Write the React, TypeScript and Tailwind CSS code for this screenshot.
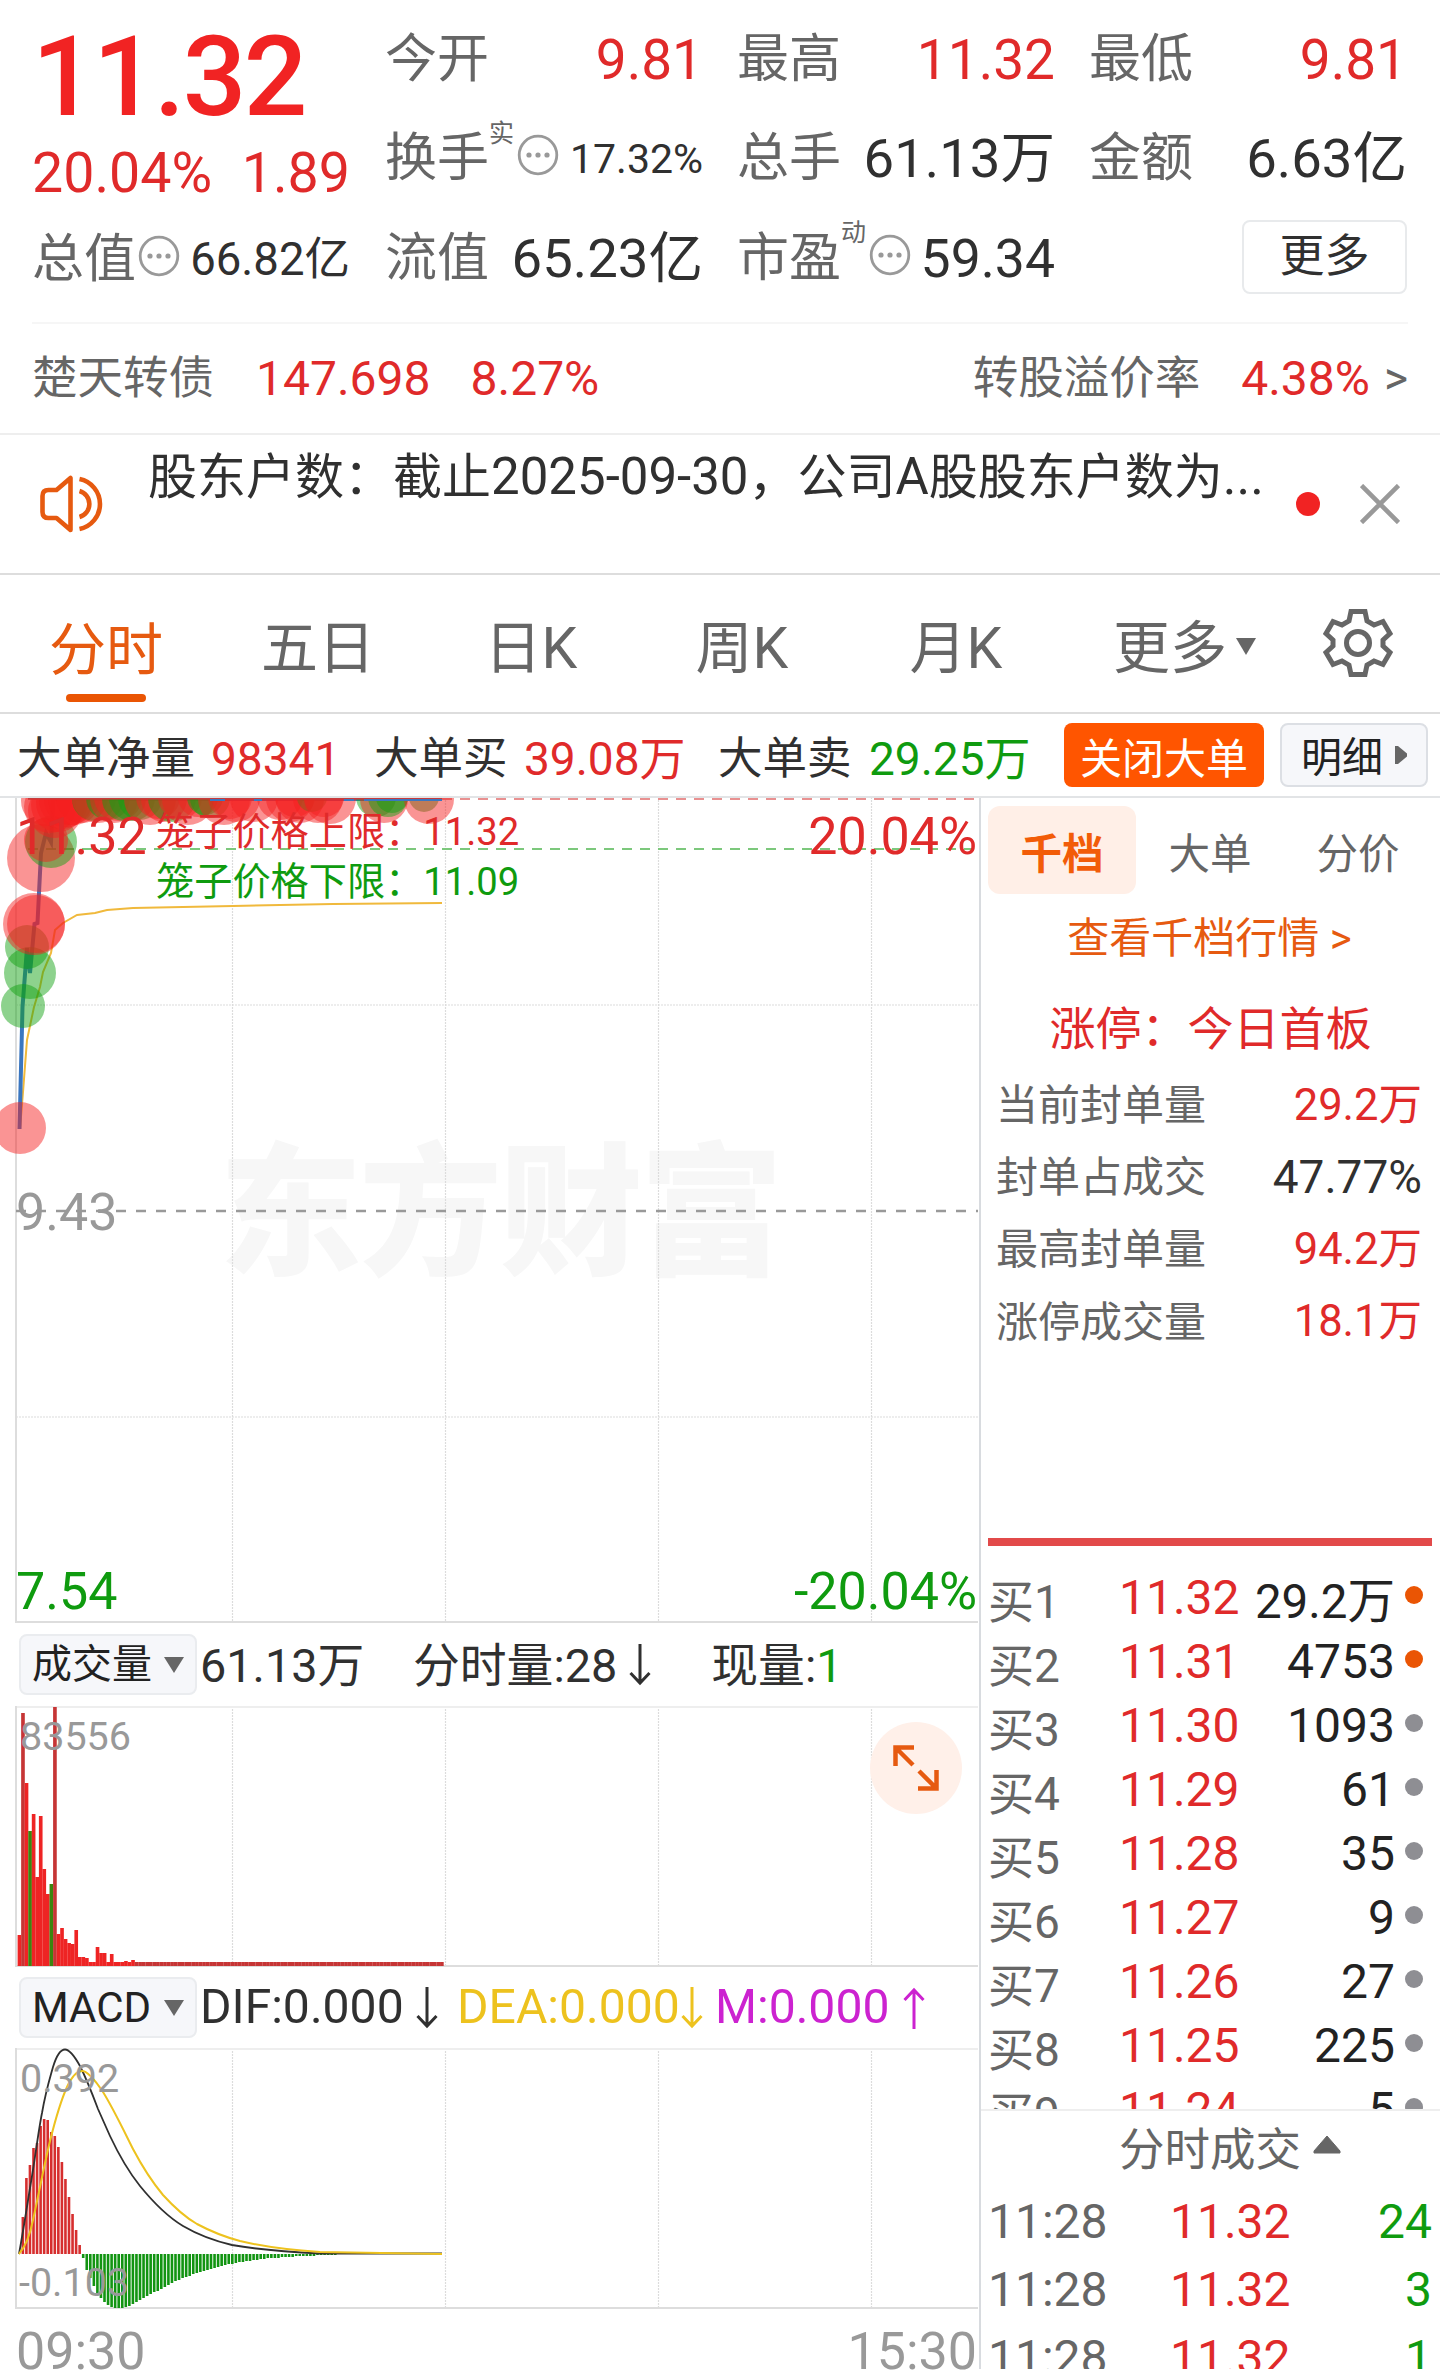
import type { ReactNode } from "react";
import clsx from "clsx";

const BAR_STEP = 3.55;

const volumes = [
  31, 253, 183, 135, 152, 89, 150, 97, 72, 82, 259, 32, 38, 27, 23, 22, 36, 9, 9, 8, 4, 4, 19, 13, 13, 4, 12, 4, 4, 4, 5,
  4, 6,
];
const greenVolumes = [3, 9];

// signed bar heights, negative values hang below the zero line
const macdBars = [
  0, 37, 76, 89, 106, 111, 128, 135, 134, 122, 118, 107, 92, 75, 57, 40, 24, 9, -4, -16, -24, -32, -39, -44, -48, -51, -53,
  -54, -54, -54, -53, -52, -50, -48, -46, -44, -42, -40, -38, -37, -35, -33, -31, -29, -27, -26, -24, -23, -22, -20, -19,
  -18, -17, -16, -15, -14, -13, -12, -11, -10, -10, -9, -8, -8, -7, -7, -6, -6, -5, -5, -4, -4, -4, -4, -3, -3, -3, -3, -2,
  -2, -2, -2, -2, -2, -1, -1, -1, -1, -1, -1,
];

// [x, y, radius, color]
const bubbles: [number, number, number, "r" | "g"][] = [
  [20, 331, 26, "r"],
  [23, 209, 22, "g"],
  [30, 176, 26, "g"],
  [27, 150, 22, "g"],
  [34, 127, 31, "r"],
  [36, 127, 29, "r"],
  [41, 61, 34, "r"],
  [51, 45, 26, "g"],
  [46, 43, 22, "r"],
  [46, 4, 25, "r"],
  [50, 10, 26, "r"],
  [55, 14, 27, "r"],
  [58, 8, 27, "r"],
  [62, 6, 26, "r"],
  [66, 3, 27, "r"],
  [70, 2, 26, "r"],
  [74, 2, 26, "r"],
  [82, 0, 26, "r"],
  [94, 2, 22, "g"],
  [98, 0, 26, "r"],
  [108, 1, 22, "g"],
  [114, 2, 24, "r"],
  [118, 0, 24, "r"],
  [124, 2, 22, "g"],
  [132, 1, 23, "g"],
  [140, 1, 22, "g"],
  [150, 2, 26, "r"],
  [158, 0, 22, "r"],
  [164, 2, 23, "r"],
  [172, 1, 24, "g"],
  [180, 0, 22, "r"],
  [188, 2, 26, "r"],
  [198, 0, 20, "r"],
  [205, 0, 18, "g"],
  [210, 1, 20, "g"],
  [224, 2, 26, "r"],
  [230, 0, 22, "r"],
  [236, 1, 24, "r"],
  [254, 1, 24, "r"],
  [280, 0, 23, "r"],
  [290, 1, 24, "r"],
  [295, 0, 20, "r"],
  [300, 2, 24, "r"],
  [312, 0, 15, "g"],
  [318, 1, 25, "r"],
  [324, 0, 20, "r"],
  [330, 1, 26, "r"],
  [376, 0, 20, "g"],
  [384, 2, 24, "r"],
  [388, 0, 20, "g"],
  [392, 0, 16, "g"],
  [424, 0, 15, "g"],
  [429, 2, 25, "r"],
];

const bids = [
  ["买1", "11.32", "29.2万", true],
  ["买2", "11.31", "4753", true],
  ["买3", "11.30", "1093", false],
  ["买4", "11.29", "61", false],
  ["买5", "11.28", "35", false],
  ["买6", "11.27", "9", false],
  ["买7", "11.26", "27", false],
  ["买8", "11.25", "225", false],
  ["买9", "11.24", "5", false],
] as const;

const sealStats = [
  ["当前封单量", "29.2万", "text-[#e02a2a] text-[43.5px]"],
  ["封单占成交", "47.77%", "text-[#303030] text-[46px]"],
  ["最高封单量", "94.2万", "text-[#e02a2a] text-[43.5px]"],
  ["涨停成交量", "18.1万", "text-[#e02a2a] text-[43.5px]"],
];

function InfoDots() {
  return (
    <svg viewBox="0 0 42 42" className="h-[42px] w-[42px] shrink-0">
      <circle cx="21" cy="21" r="18.8" fill="none" stroke="#999" strokeWidth="2.8" />
      <circle cx="12" cy="21" r="2.6" fill="#999" />
      <circle cx="21" cy="21" r="2.6" fill="#999" />
      <circle cx="30" cy="21" r="2.6" fill="#999" />
    </svg>
  );
}

function Stat({ label, sup, dots, children }: { label: string; sup?: string; dots?: boolean; children: ReactNode }) {
  return (
    <div className="flex h-[99.5px] items-center justify-between whitespace-nowrap">
      <div className="flex items-center">
        <span className="text-[52px] text-[#666]">{label}</span>
        {sup && <span className="-mt-[52px] w-[26px] text-[25px] text-[#666]">{sup}</span>}
        {dots && (
          <span className="-mt-2 ml-0.5">
            <InfoDots />
          </span>
        )}
      </div>
      {children}
    </div>
  );
}

function Header() {
  return (
    <section className="flex h-[322px] pl-8">
      <div className="w-[318px] whitespace-nowrap">
        <div className="h-[148px] text-[112px] leading-[154px] font-medium tracking-[-2.6px] text-[#f12323]">11.32</div>
        <div className="flex h-[62px] justify-between text-[55.5px] leading-[52px] text-[#e02a2a]">
          <span>20.04%</span>
          <span>1.89</span>
        </div>
        <Stat label="总值" dots>
          <span className="text-[45.5px] text-[#303030]">66.82亿</span>
        </Stat>
      </div>
      <div className="ml-[35px] grid w-[1022px] grid-cols-3 content-start gap-x-[34px] pt-[10px] text-[55px]">
        <Stat label="今开">
          <span className="text-[#e02a2a]">9.81</span>
        </Stat>
        <Stat label="最高">
          <span className="text-[#e02a2a]">11.32</span>
        </Stat>
        <Stat label="最低">
          <span className="text-[#e02a2a]">9.81</span>
        </Stat>
        <Stat label="换手" sup="实" dots>
          <span className="text-[41px] text-[#303030]">17.32%</span>
        </Stat>
        <Stat label="总手">
          <span className="text-[54.5px] text-[#303030]">61.13万</span>
        </Stat>
        <Stat label="金额">
          <span className="text-[54.5px] text-[#303030]">6.63亿</span>
        </Stat>
        <Stat label="流值">
          <span className="text-[54.5px] text-[#303030]">65.23亿</span>
        </Stat>
        <Stat label="市盈" sup="动" dots>
          <span className="text-[53.5px] text-[#303030]">59.34</span>
        </Stat>
        <div className="flex h-[96px] items-center justify-end">
          <button className="h-[74px] w-[165px] rounded-lg border-2 border-[#e8eaec] text-[45px] leading-[70px] text-[#303030]">
            更多
          </button>
        </div>
      </div>
    </section>
  );
}

function BondRow() {
  return (
    <section className="mx-8 flex h-[111px] items-center border-t-2 border-[#f6f6f6] text-[48px] whitespace-nowrap text-[#e02a2a]">
      <span className="pt-0.5 text-[45.5px] text-[#666]">楚天转债</span>
      <span className="ml-[42px]">147.698</span>
      <span className="ml-[40px]">8.27%</span>
      <span className="ml-auto pt-0.5 text-[45.5px] text-[#666]">转股溢价率</span>
      <span className="ml-[41px]">4.38%</span>
      <span className="ml-[14px] text-[46px] text-[#666]">&gt;</span>
    </section>
  );
}

function Notice() {
  return (
    <section className="flex h-[140px] items-center border-t-2 border-[#eee]">
      <svg viewBox="0 0 70 60" className="ml-[38px] h-[60px] w-[71px]" fill="none" stroke="#e65a10" strokeWidth="4.600">
        <path d="M32 4v52L18 44H10q-6 0-6-6V22q0-6 6-6h8z" strokeLinejoin="round" />
        <path d="M41 17a13.5 13.5 0 0 1 0 26M41 5a25.500 25.500 0 0 1 0 50" />
      </svg>
      <p className="mb-[53px] ml-[39px] w-[1126px] text-[49px] leading-[60px] whitespace-nowrap text-[#303030]">
        股东户数：截止<span className="text-[51px]">2025-09-30</span>，公司<span className="text-[51px]">A</span>股股东户数为
        <span className="text-[52px]">...</span>
      </p>
      <span className="ml-[22px] h-6 w-6 rounded-full bg-[#f12323]" />
      <svg viewBox="0 0 40 40" className="ml-[40px] h-10 w-10" stroke="#999" strokeWidth="4.600">
        <path d="M1.5 1.5l37 37M38.5 1.5l-37 37" />
      </svg>
    </section>
  );
}

function PeriodTabs() {
  return (
    <nav className="flex h-[139px] items-center border-t-2 border-[#ddd] pb-0.5 text-[57px] whitespace-nowrap text-[#666]">
      <div className="relative flex h-full w-[212px] items-center justify-center pt-4 text-[#e65a10]">
        分时
        <span className="absolute bottom-[8px] h-2 w-20 rounded-full bg-[#ea5504]" />
      </div>
      <div className="w-[212px] pt-3 text-center">五日</div>
      <div className="w-[214px] pt-3 text-center">日K</div>
      <div className="w-[208px] pt-3 text-center">周K</div>
      <div className="w-[220px] pt-3 text-center">月K</div>
      <div className="ml-[47px] flex w-[143px] items-center justify-between pt-3">
        更多
        <svg viewBox="0 0 20 17" className="h-[17px] w-5 -translate-y-0.5" fill="#666">
          <path d="M0 0h20L10 17z" />
        </svg>
      </div>
      <svg viewBox="0 0 72 72" className="ml-[66px] h-[72px] w-[72px]" fill="none" stroke="#666" strokeWidth="5">
        <path d="M29 4.500h14l2 9.500 7 4 9-3.500 7 12-7 6.500v6l7 6.500-7 12-9-3.500-7 4-2 9.500H29l-2-9.500-7-4-9 3.500-7-12 7-6.500v-6l-7-6.500 7-12 9 3.500 7-4z" />
        <circle cx="36" cy="36" r="11.500" />
      </svg>
    </nav>
  );
}

function BigOrderBar() {
  return (
    <section className="flex h-[84px] items-center border-t-2 border-[#ddd] pl-[17px] text-[46px] whitespace-nowrap text-[#303030]">
      <span className="w-[194px] pt-2 text-[44.5px]">大单净量</span>
      <span className="w-[163px] pt-2 text-[#e02a2a]">98341</span>
      <span className="w-[150px] pt-2 text-[44.5px]">大单买</span>
      <span className="w-[194px] pt-2 text-[#e02a2a]">39.08万</span>
      <span className="w-[151px] pt-2 text-[44.5px]">大单卖</span>
      <span className="w-[195px] pt-2 text-[#0f9b0f]">29.25万</span>
      <button className="h-16 w-[200px] rounded-lg bg-[#ff5500] text-[42px] leading-[74px] text-white">关闭大单</button>
      <button className="ml-4 flex h-16 w-[148px] items-center rounded-lg border-2 border-[#dcdfe4] bg-[#f6f7fa] pl-[19px] text-[41px] text-[#222]">
        <span className="pt-2">明细</span>
        <svg viewBox="0 0 12 18" className="ml-3 h-[18px] w-3" fill="#666">
          <path d="M0 0h3l9 7.500v3L3 18H0z" />
        </svg>
      </button>
    </section>
  );
}

function VerticalGrid({ height }: { height: number }) {
  return (
    <g stroke="#dcdcdc" strokeWidth="1.2" strokeDasharray="2 1">
      {[232.5, 445.5, 658.5, 871.5].map((x) => (
        <path key={x} d={`M${x} 0V${height}`} />
      ))}
    </g>
  );
}

function PriceChart() {
  return (
    <div className="relative h-[825px] overflow-hidden">
      <svg viewBox="0 1 979 825" className="block h-[825px] w-[979px]" fill="none">
        <text
          x="501"
          y="467"
          textAnchor="middle"
          textLength="564"
          fill="#f7f7f7"
          className="font-['Noto_Sans_CJK_SC',sans-serif] text-[143px] font-black"
        >
          东方财富
        </text>
        <VerticalGrid height={825} />
        <path d="M16 208H978M16 620H978" stroke="#dcdcdc" strokeWidth="1.200" strokeDasharray="2 1" />
        <path d="M16 0V825H978" stroke="#ddd" strokeWidth="2" />
        <path d="M16 414H978" stroke="#999" strokeWidth="2.500" strokeDasharray="10 10" />
        <path d="M28 2H978" stroke="#e89090" strokeWidth="2" strokeDasharray="10 8" />
        <path d="M28 52H978" stroke="#7cc87c" strokeWidth="2" strokeDasharray="10 8" />
        <path
          d="M20 332L23 295 27 243 34 210 40 190 43 175 51 156 55 133 63 126 77 118 95 116 107 113 133 111 233 109 333 107 442 106"
          stroke="#f0b93c"
          strokeWidth="2"
        />
        <path d="M19.500 332L22.500 210 27 151 30 176 34.500 127 37.500 126 41 56 46 36 51 45 53 2H442" stroke="#3a76c0" strokeWidth="4" />
        {bubbles.map(([cx, cy, r, color], i) => (
          <circle key={i} cx={cx} cy={cy} r={r} fill={color === "r" ? "#f52020" : "#10a010"} fillOpacity={0.48} />
        ))}
        <path d="M28 1.500H442" stroke="#c83c3c" strokeWidth="2" />
        <path d="M210 3H225M254 3H262M344 3H354M364 3H442" stroke="#3a76c0" strokeWidth="2" />
      </svg>
      <span className="absolute top-[11px] left-[16px] text-[52px] leading-[56px] text-[#e02a2a]">11.32</span>
      <span className="absolute top-[11px] right-[2px] text-[52px] leading-[56px] text-[#e02a2a]">20.04%</span>
      <span className="absolute top-[9px] left-[156px] text-[38.2px] leading-[50px] text-[#e02a2a]">笼子价格上限：11.32</span>
      <span className="absolute top-[59px] left-[156px] text-[38.2px] leading-[50px] text-[#0f9b0f]">笼子价格下限：11.09</span>
      <span className="absolute top-[387px] left-[16px] text-[52px] leading-[56px] text-[#999]">9.43</span>
      <span className="absolute top-[766px] left-[16px] text-[52px] leading-[56px] text-[#0f9b0f]">7.54</span>
      <span className="absolute top-[766px] right-[2px] text-[52px] leading-[56px] text-[#0f9b0f]">-20.04%</span>
    </div>
  );
}

function IndicatorButton({ children }: { children: ReactNode }) {
  return (
    <button className="mr-[3px] ml-[19px] flex h-[61px] w-[178px] items-center justify-between rounded-lg border-2 border-[#eaecef] bg-[#f6f7fa] pr-[11px] pl-[11px] text-[#222]">
      {children}
      <svg viewBox="0 0 20 16" className="h-4 w-5" fill="#666">
        <path d="M0 0h20L10 16z" />
      </svg>
    </button>
  );
}

function Arrow({ up, className }: { up?: boolean; className?: string }) {
  return (
    <svg viewBox="0 0 22 42" className={clsx("h-[42px] w-[22px] shrink-0", className)} fill="none" stroke="currentColor" strokeWidth="3">
      <path d={up ? "M11 42V3M1.500 13L11 3l9.500 10" : "M11 0v39M1.500 29L11 39l9.500-10"} />
    </svg>
  );
}

function VolumeChart() {
  return (
    <>
      <div className="flex h-[83px] items-center text-[46.800px] whitespace-nowrap text-[#303030]">
        <IndicatorButton>
          <span className="text-[40px]">成交量</span>
        </IndicatorButton>
        <span className="w-[213px] pt-1">61.13万</span>
        <span className="pt-1">分时量:28</span>
        <Arrow className="ml-3" />
        <span className="ml-[60px] pt-1">
          现量:<span className="text-[#0f9b0f]">1</span>
        </span>
      </div>
      <div className="relative h-[261px]">
        <svg viewBox="0 0 979 261" className="block h-[261px] w-[979px]" fill="none">
          <VerticalGrid height={260} />
          <path d="M16 1H978" stroke="#eee" strokeWidth="2" />
          <path d="M16 0V260H978" stroke="#ddd" strokeWidth="2" />
          {Array.from({ length: 120 }, (_, i) => {
            const h = volumes[i] ?? 4;
            return (
              <rect
                key={i}
                x={17.6 + i * BAR_STEP}
                y={260 - h}
                width={BAR_STEP + 0.1}
                height={h}
                fill={greenVolumes.includes(i) ? "#3b850f" : i > 32 || i === 1 || i === 10 ? "#c63535" : "#ee2424"}
              />
            );
          })}
        </svg>
        <span className="absolute top-[11px] left-[20px] text-[39.500px] leading-[40px] text-[#999]">83556</span>
        <button className="absolute top-[16px] right-[17px] flex h-[92px] w-[92px] items-center justify-center rounded-full bg-[#fff0e9]">
          <svg viewBox="0 0 46 46" className="h-[46px] w-[46px]" fill="none" stroke="#e65a10" strokeWidth="4.500">
            <path d="M21 2.500H2.500V21M3 3l17 17M25 43.500h18.500V25M43 43L26 26" />
          </svg>
        </button>
      </div>
    </>
  );
}

function MacdChart() {
  return (
    <>
      <div className="flex h-[81px] items-center text-[48.100px] whitespace-nowrap text-[#303030]">
        <IndicatorButton>
          <span className="text-[42px]">MACD</span>
        </IndicatorButton>
        <span className="w-[216px]">DIF:0.000</span>
        <Arrow />
        <span className="ml-[19px] w-[224px] text-[#edc21e]">DEA:0.000</span>
        <Arrow className="text-[#edc21e]" />
        <span className="ml-[12px] w-[188px] text-[#cc22d0]">M:0.000</span>
        <Arrow up className="text-[#cc22d0]" />
      </div>
      <div className="relative h-[261px]">
        <svg viewBox="0 0 979 261" className="block h-[261px] w-[979px]" fill="none">
          <VerticalGrid height={260} />
          <path d="M16 1H978" stroke="#eee" strokeWidth="2" />
          <path d="M16 0V260H978" stroke="#ddd" strokeWidth="2" />
          {macdBars.map((v, i) => (
            <rect
              key={i}
              x={18 + i * BAR_STEP}
              y={v > 0 ? 206 - v : 206}
              width={2.6}
              height={Math.abs(v)}
              fill={v > 0 ? "#d62e2e" : "#129412"}
            />
          ))}
          {/* DIF */}
          <path
            d="M19 206C22 190 26 165 30 140 35 112 38 85 42 65 46 42 50 30 53 19 57 6 61 1.500 65 1.500 70 1.500 75 9 80 18 87 32 92 45 98 61L110 88C118 105 128 123 140 138 153 154 168 169 183 178 200 188 215 193 232 197 260 202 290 204 320 205.500H442"
            stroke="#303030"
            strokeWidth="1.800"
          />
          {/* DEA */}
          <path
            d="M19 206C26 198 30 187 33 172 40 140 44 118 50 93 57 65 62 50 67 39 73 26 78 23 82 23 88 23 95 32 103 44 113 60 123 81 133 101 143 120 153 135 163 147 173 158 183 168 197 176 210 183 225 189 240 193 265 199 290 202 320 204L442 206"
            stroke="#edc21e"
            strokeWidth="2"
          />
        </svg>
        <span className="absolute top-[11px] left-[20px] text-[39.500px] leading-[40px] text-[#999]">0.392</span>
        <span className="absolute top-[215px] left-[19px] text-[39.500px] leading-[40px] text-[#999]">-0.103</span>
      </div>
      <div className="flex h-[62px] justify-between overflow-hidden pr-[2px] pl-[16px] text-[52px] leading-[86px] text-[#999]">
        <span>09:30</span>
        <span>15:30</span>
      </div>
    </>
  );
}

function OrderPanel() {
  return (
    <aside className="flex h-full flex-1 flex-col border-l-2 border-[#d8dbdf] whitespace-nowrap">
      <div className="mt-2 ml-[7px] flex h-[88px] text-center text-[41.500px] leading-[98px] text-[#666]">
        <span className="w-[148px] rounded-xl bg-[#ffefe7] font-bold text-[#f25c08]">千档</span>
        <span className="w-[148px]">大单</span>
        <span className="w-[148px]">分价</span>
      </div>
      <a className="h-[86px] pr-0.5 text-center text-[42px] leading-[89px] text-[#e65a10]">查看千档行情 &gt;</a>
      <h2 className="h-[88px] text-center text-[46px] leading-[99px] text-[#e02a2a]">涨停：今日首板</h2>
      <dl className="pt-px pr-[18px] pl-[15px]">
        {sealStats.map(([label, value, cls]) => (
          <div key={label} className="flex h-[72.300px] items-center justify-between">
            <dt className="text-[42px] text-[#666]">{label}</dt>
            <dd className={cls}>{value}</dd>
          </div>
        ))}
      </dl>
      <div className="mt-[180px] mr-2 ml-[7px] h-2 shrink-0 bg-[#e24a4a]" />
      <ul className="mt-5 h-[543px] shrink-0 overflow-hidden text-[48px]">
        {bids.map(([level, price, size, hot], i) => (
          <li key={level} className="flex h-16 items-center">
            <span className="w-[130px] pt-2 pl-[7px] text-[46px] text-[#666]">{level}</span>
            <span className="w-[120px] pl-[8px] text-[#e02a2a]">{price}</span>
            <span className={clsx("flex-1 text-right text-[#222]", i === 0 && "pt-2 text-[47.500px]")}>{size}</span>
            <span className={clsx("mr-[17px] mb-1.5 ml-[10px] h-[18px] w-[18px] rounded-full", hot ? "bg-[#ea5504]" : "bg-[#8e8e93]")} />
          </li>
        ))}
      </ul>
      <div className="flex h-[79px] shrink-0 items-center border-t-2 border-[#eee] pt-0.5 pl-[138px] text-[45.500px] text-[#666]">
        分时成交
        <svg viewBox="0 0 28 19" className="ml-3 h-[19px] w-7 -translate-y-1.5" fill="#666" stroke="#666" strokeLinejoin="round">
          <path d="M14 1L27 16v2H1v-2z" />
        </svg>
      </div>
      <ul className="min-h-0 flex-1 overflow-hidden text-[48px]">
        {["24", "3", "1"].map((size) => (
          <li key={size} className="flex h-[68px] items-center pr-2 pl-[7px]">
            <span className="w-[182px] text-[#666]">11:28</span>
            <span className="text-[#e02a2a]">11.32</span>
            <span className="ml-auto text-[#0f9b0f]">{size}</span>
          </li>
        ))}
      </ul>
    </aside>
  );
}

export default function App() {
  return (
    <div className="h-[2371px] w-[1440px] overflow-hidden bg-white font-[Roboto,'Noto_Sans_CJK_SC',sans-serif]">
      <Header />
      <BondRow />
      <Notice />
      <PeriodTabs />
      <BigOrderBar />
      <main className="flex h-[1573px] border-t-2 border-[#e2e4e6]">
        <div className="w-[979px]">
          <PriceChart />
          <VolumeChart />
          <MacdChart />
        </div>
        <OrderPanel />
      </main>
    </div>
  );
}
